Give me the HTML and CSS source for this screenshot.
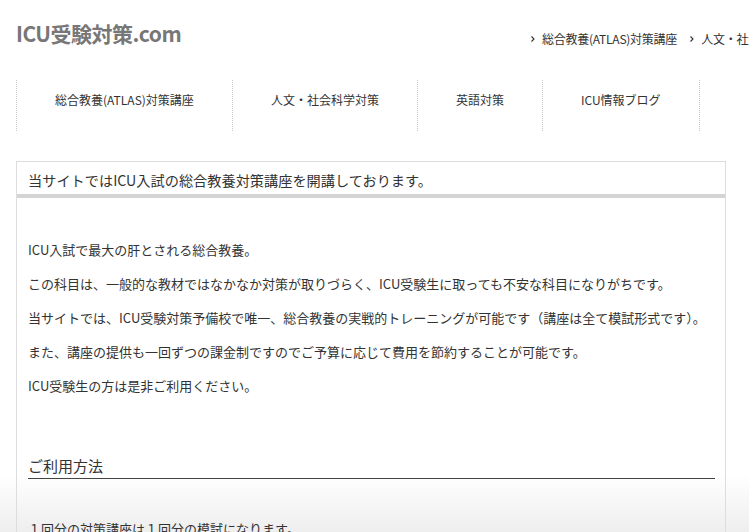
FILE: index.html
```html
<!DOCTYPE html>
<html lang="ja">
<head>
<meta charset="utf-8">
<title>ICU受験対策.com</title>
<link rel="stylesheet" href="styles.css">
</head>
<body>
<header class="site-header">
  <div class="logo">ICU受験対策.com</div>
  <ul class="top-links">
    <li><svg class="chev" width="4" height="6" viewBox="0 0 4 6"><polyline points="0.5,0.5 3,3 0.5,5.5" fill="none" stroke="#333" stroke-width="1.1"/></svg><a href="#">総合教養(ATLAS)対策講座</a></li>
    <li><svg class="chev" width="4" height="6" viewBox="0 0 4 6"><polyline points="0.5,0.5 3,3 0.5,5.5" fill="none" stroke="#333" stroke-width="1.1"/></svg><a href="#">人文・社会科学対策</a></li>
    <li><svg class="chev" width="4" height="6" viewBox="0 0 4 6"><polyline points="0.5,0.5 3,3 0.5,5.5" fill="none" stroke="#333" stroke-width="1.1"/></svg><a href="#">英語対策</a></li>
  </ul>
</header>
<nav class="global-nav">
  <a class="nav-item" href="#">総合教養(ATLAS)対策講座</a>
  <a class="nav-item" href="#">人文・社会科学対策</a>
  <a class="nav-item" href="#">英語対策</a>
  <a class="nav-item" href="#">ICU情報ブログ</a>
</nav>
<main class="entry">
  <h1 class="entry-title">当サイトではICU入試の総合教養対策講座を開講しております。</h1>
  <div class="entry-body">
    <p>ICU入試で最大の肝とされる総合教養。</p>
    <p>この科目は、一般的な教材ではなかなか対策が取りづらく、ICU受験生に取っても不安な科目になりがちです。</p>
    <p>当サイトでは、ICU受験対策予備校で唯一、総合教養の実戦的トレーニングが可能です（講座は全て模試形式です）。</p>
    <p>また、講座の提供も一回ずつの課金制ですのでご予算に応じて費用を節約することが可能です。</p>
    <p>ICU受験生の方は是非ご利用ください。</p>
    <h2 class="section-title">ご利用方法</h2>
    <p>１回分の対策講座は１回分の模試になります。</p>
    <p>講座はお申し込み後にメールでお送りいたします。</p>
  </div>
</main>
</body>
</html>
```
FILE: styles.css
```css
html {
  overflow-x: hidden;
  background: linear-gradient(to bottom, #ffffff 0, #ffffff calc(100% - 58px), #eeeeee 100%) fixed;
  min-height: 100%;
}
body {
  margin: 0;
  overflow-x: hidden;
  font-family: "Noto Sans CJK JP", "Noto Sans", sans-serif;
  color: #333;
  font-size: 13px;
}
a {
  color: #333;
  text-decoration: none;
}
.site-header {
  display: grid;
  grid-template-columns: 515px max-content;
  align-items: start;
  padding: 18px 0 0 16px;
  white-space: nowrap;
}
.logo {
  font-size: 21px;
  line-height: 30px;
  font-weight: 700;
  color: #777;
  letter-spacing: -0.5px;
}
.top-links {
  list-style: none;
  margin: 0;
  padding: 12px 0 0 0;
  display: flex;
  gap: 13px;
  font-size: 12px;
  line-height: 18px;
  letter-spacing: -0.25px;
}
.top-links li {
  display: flex;
  align-items: center;
  gap: 7px;
}
.chev {
  display: block;
}
.global-nav {
  display: flex;
  margin: 32px 0 0 16px;
  height: 51px;
  white-space: nowrap;
}
.nav-item {
  display: block;
  padding: 12px 38px 0;
  font-size: 12px;
  line-height: 16px;
  border-left: 1px dotted #c8c8c8;
}
.nav-item:last-child {
  border-right: 1px dotted #c8c8c8;
}
.entry {
  width: 710px;
  box-sizing: border-box;
  margin: 30px 0 0 16px;
  border: 1px solid #dddddd;
  border-bottom: none;
}
.entry-title {
  margin: 0;
  padding: 4px 11px 0;
  height: 28px;
  font-size: 14.2px;
  line-height: 28px;
  font-weight: 400;
  color: #333;
  border-bottom: 4px solid #d4d4d4;
  background: #fff;
}
.entry-body {
  padding: 40px 10px 0 11px;
}
.entry-body p {
  margin: 0 0 11px;
  line-height: 23px;
}
.section-title {
  margin: 58px 0 38px;
  padding-bottom: 1px;
  font-size: 15px;
  line-height: 22px;
  font-weight: 400;
  color: #333;
  border-bottom: 1px solid #444;
}
```
